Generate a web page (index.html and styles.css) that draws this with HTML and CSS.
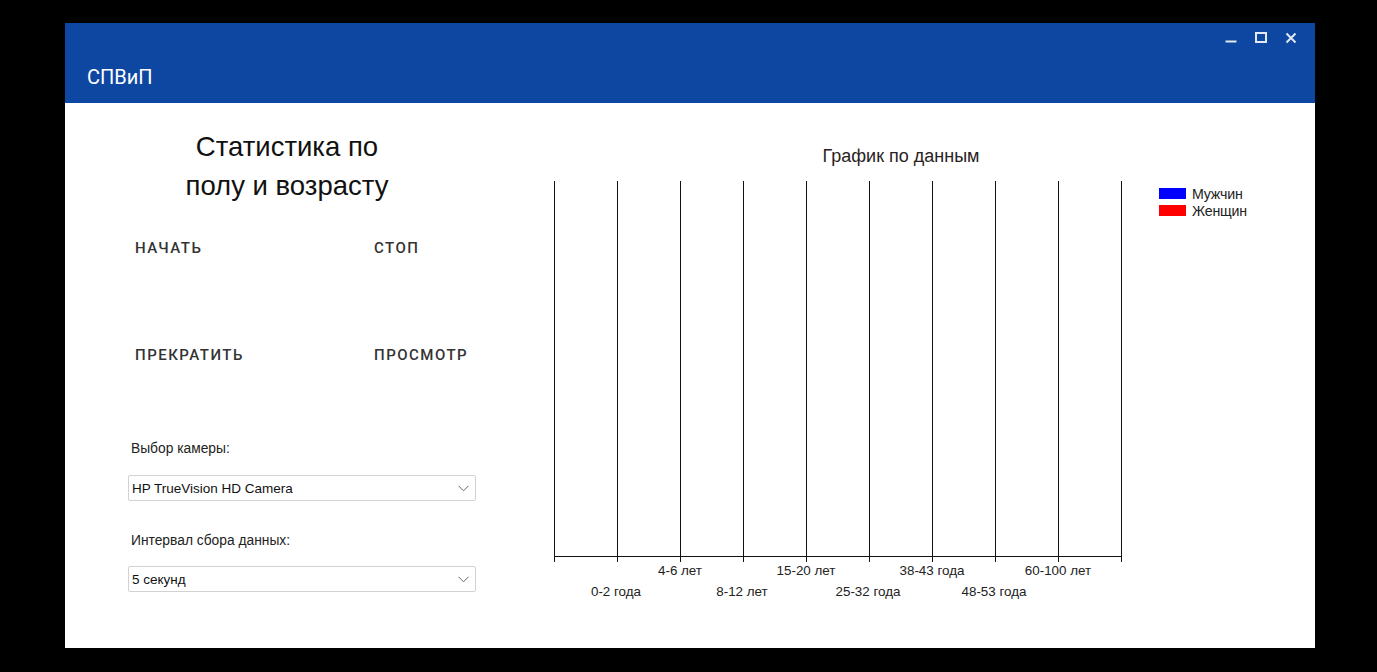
FILE: index.html
```html
<!DOCTYPE html>
<html lang="ru">
<head>
<meta charset="utf-8">
<title>СПВиП</title>
<link rel="stylesheet" href="styles.css">
</head>
<body>
<div class="window">
  <header class="titlebar">
    <div class="controls">
      <span class="ctl"><svg width="12" height="12" viewBox="0 0 12 12"><rect x="0.5" y="8.5" width="11" height="2" fill="#e3e9f4"/></svg></span>
      <span class="ctl"><svg width="12" height="12" viewBox="0 0 12 12"><rect x="1" y="1" width="10" height="9" fill="none" stroke="#e3e9f4" stroke-width="2"/></svg></span>
      <span class="ctl"><svg width="12" height="12" viewBox="0 0 12 12"><path d="M1.5 1.5 L10.5 10.5 M10.5 1.5 L1.5 10.5" stroke="#e3e9f4" stroke-width="2" fill="none"/></svg></span>
    </div>
    <div class="app-title">СПВиП</div>
  </header>
  <main class="content">
    <section class="left">
      <h1 class="heading">Статистика по<br>полу и возрасту</h1>
      <div class="buttons">
        <button class="btn">НАЧАТЬ</button>
        <button class="btn">СТОП</button>
        <button class="btn">ПРЕКРАТИТЬ</button>
        <button class="btn">ПРОСМОТР</button>
      </div>
      <div class="field first">
        <div class="field-label">Выбор камеры:</div>
        <div class="select"><span>HP TrueVision HD Camera</span><svg width="11" height="7" viewBox="0 0 11 7"><path d="M0.5 0.8 L5.5 5.8 L10.5 0.8" stroke="#666" stroke-width="1" fill="none"/></svg></div>
      </div>
      <div class="field">
        <div class="field-label">Интервал сбора данных:</div>
        <div class="select"><span>5 секунд</span><svg width="11" height="7" viewBox="0 0 11 7"><path d="M0.5 0.8 L5.5 5.8 L10.5 0.8" stroke="#666" stroke-width="1" fill="none"/></svg></div>
      </div>
    </section>
    <section class="chart">
      <div class="chart-title">График по данным</div>
      <div class="chart-row">
        <div class="chart-body">
          <div class="plot">
            <div class="col"><div class="cell"></div><div class="tick"></div></div>
            <div class="col"><div class="cell"></div><div class="tick"></div></div>
            <div class="col"><div class="cell"></div><div class="tick"></div></div>
            <div class="col"><div class="cell"></div><div class="tick"></div></div>
            <div class="col"><div class="cell"></div><div class="tick"></div></div>
            <div class="col"><div class="cell"></div><div class="tick"></div></div>
            <div class="col"><div class="cell"></div><div class="tick"></div></div>
            <div class="col"><div class="cell"></div><div class="tick"></div></div>
            <div class="col"><div class="cell"></div><div class="tick"></div></div>
          </div>
          <div class="labels row1">
            <span>4-6 лет</span><span>15-20 лет</span><span>38-43 года</span><span>60-100 лет</span>
          </div>
          <div class="labels row2">
            <span>0-2 года</span><span>8-12 лет</span><span>25-32 года</span><span>48-53 года</span>
          </div>
        </div>
        <div class="legend">
          <div class="legend-item"><span class="swatch male"></span>Мужчин</div>
          <div class="legend-item"><span class="swatch female"></span>Женщин</div>
        </div>
      </div>
    </section>
  </main>
</div>
</body>
</html>
```

FILE: styles.css
```css
* { box-sizing: border-box; }
html, body { margin: 0; }
body {
  background: #000;
  padding: 23px 0 0 65px;
  font-family: "Liberation Sans", Arial, sans-serif;
  width: 1377px;
  height: 672px;
  overflow: hidden;
}
.window {
  width: 1250px;
  height: 625px;
  background: #fff;
  display: flex;
  flex-direction: column;
}
.titlebar {
  height: 80px;
  background: #0e47a1;
  color: #fff;
}
.controls {
  display: flex;
  justify-content: flex-end;
  padding: 9px 9px 0 0;
  height: 21px;
}
.ctl {
  width: 30px;
  height: 12px;
  display: flex;
  justify-content: center;
}
.app-title {
  margin-top: 20px;
  padding-left: 22px;
  font-family: Roboto, "Liberation Sans", sans-serif;
  font-size: 20px;
  line-height: 26px;
}
.content {
  flex: 1;
  display: flex;
}
.left {
  width: 411px;
  padding-left: 63px;
}
.heading {
  margin: 0;
  padding-top: 24px;
  width: 318px;
  text-align: center;
  font-weight: normal;
  font-size: 27.5px;
  line-height: 39px;
  color: #111;
}
.buttons {
  margin-top: 25px;
  display: grid;
  grid-template-columns: 239px 1fr;
  row-gap: 71px;
}
.btn {
  justify-self: start;
  height: 36px;
  padding: 0 7px;
  border: 0;
  background: transparent;
  font-family: Roboto, "Liberation Sans", sans-serif;
  font-weight: 500;
  font-size: 15px;
  letter-spacing: 1.5px;
  color: #333;
}
.field.first { margin-top: 67px; }
.field { margin-top: 31px; }
.field-label {
  padding-left: 3px;
  font-size: 13.8px;
  line-height: 18px;
  color: #222;
}
.select {
  margin-top: 17px;
  width: 348px;
  height: 26px;
  border: 1px solid #d2d2d2;
  border-radius: 2px;
  display: flex;
  align-items: center;
  justify-content: space-between;
  padding: 0 6px 0 3px;
  font-size: 13.5px;
  color: #111;
}
.field:not(.first) .select { margin-top: 16px; }
.chart {
  margin-left: 78px;
  width: 694px;
  padding-top: 43px;
}
.chart-title {
  text-align: center;
  font-size: 18px;
  line-height: 20px;
  color: #2a2222;
}
.chart-row {
  margin-top: 15px;
  display: flex;
}
.chart-body { width: 568px; }
.plot {
  display: flex;
  border-right: 1px solid #111;
}
.col { width: 63px; }
.cell {
  height: 376px;
  border-left: 1px solid #111;
  border-bottom: 1px solid #111;
}
.tick {
  height: 5px;
  border-left: 1px solid #111;
}
.labels {
  display: flex;
  font-size: 13.4px;
  line-height: 14px;
  color: #222;
}
.labels span {
  width: 126px;
  text-align: center;
}
.row1 { margin-top: 2px; padding-left: 63px; }
.row2 { margin-top: 7px; margin-left: -1px; }
.legend {
  margin-left: 37px;
  margin-top: 4px;
}
.legend-item {
  display: flex;
  align-items: center;
  height: 17px;
  font-size: 14.2px;
  color: #222;
  letter-spacing: -0.2px;
}
.swatch {
  width: 27px;
  height: 11px;
  margin-right: 6px;
}
.male { background: #0000ff; }
.female { background: #ff0000; }
```
